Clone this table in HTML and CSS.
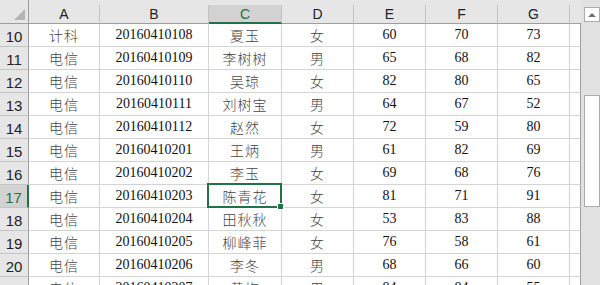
FILE: index.html
```html
<!DOCTYPE html>
<html>

<head>
    <link rel="stylesheet" href="styles.css">
    <title>成绩表</title>
</head>

<body>
    <div class="window">
        <div class="sheet">
            <!-- column headers -->
            <div class="corner">
                <svg width="11" height="11" viewBox="0 0 11 11"><polygon points="11,0 11,11 0,11" fill="#b4b4b4"/></svg>
            </div>
            <div class="colhead">A</div>
            <div class="colhead">B</div>
            <div class="colhead sel">C</div>
            <div class="colhead">D</div>
            <div class="colhead">E</div>
            <div class="colhead">F</div>
            <div class="colhead">G</div>
            <div class="colhead last"></div>

            <div class="rowhead">10</div>
            <div class="cell cn">计科</div><div class="cell num">20160410108</div><div class="cell cn">夏玉</div><div class="cell cn">女</div>
            <div class="cell num">60</div><div class="cell num">70</div><div class="cell num">73</div><div class="cell edge"></div>

            <div class="rowhead">11</div>
            <div class="cell cn">电信</div><div class="cell num">20160410109</div><div class="cell cn">李树树</div><div class="cell cn">男</div>
            <div class="cell num">65</div><div class="cell num">68</div><div class="cell num">82</div><div class="cell edge"></div>

            <div class="rowhead">12</div>
            <div class="cell cn">电信</div><div class="cell num">20160410110</div><div class="cell cn">吴琼</div><div class="cell cn">女</div>
            <div class="cell num">82</div><div class="cell num">80</div><div class="cell num">65</div><div class="cell edge"></div>

            <div class="rowhead">13</div>
            <div class="cell cn">电信</div><div class="cell num">20160410111</div><div class="cell cn">刘树宝</div><div class="cell cn">男</div>
            <div class="cell num">64</div><div class="cell num">67</div><div class="cell num">52</div><div class="cell edge"></div>

            <div class="rowhead">14</div>
            <div class="cell cn">电信</div><div class="cell num">20160410112</div><div class="cell cn">赵然</div><div class="cell cn">女</div>
            <div class="cell num">72</div><div class="cell num">59</div><div class="cell num">80</div><div class="cell edge"></div>

            <div class="rowhead">15</div>
            <div class="cell cn">电信</div><div class="cell num">20160410201</div><div class="cell cn">王炳</div><div class="cell cn">男</div>
            <div class="cell num">61</div><div class="cell num">82</div><div class="cell num">69</div><div class="cell edge"></div>

            <div class="rowhead">16</div>
            <div class="cell cn">电信</div><div class="cell num">20160410202</div><div class="cell cn">李玉</div><div class="cell cn">女</div>
            <div class="cell num">69</div><div class="cell num">68</div><div class="cell num">76</div><div class="cell edge"></div>

            <div class="rowhead sel">17</div>
            <div class="cell cn">电信</div><div class="cell num">20160410203</div><div class="cell cn active">陈青花</div><div class="cell cn">女</div>
            <div class="cell num">81</div><div class="cell num">71</div><div class="cell num">91</div><div class="cell edge"></div>

            <div class="rowhead">18</div>
            <div class="cell cn">电信</div><div class="cell num">20160410204</div><div class="cell cn">田秋秋</div><div class="cell cn">女</div>
            <div class="cell num">53</div><div class="cell num">83</div><div class="cell num">88</div><div class="cell edge"></div>

            <div class="rowhead">19</div>
            <div class="cell cn">电信</div><div class="cell num">20160410205</div><div class="cell cn">柳峰菲</div><div class="cell cn">女</div>
            <div class="cell num">76</div><div class="cell num">58</div><div class="cell num">61</div><div class="cell edge"></div>

            <div class="rowhead">20</div>
            <div class="cell cn">电信</div><div class="cell num">20160410206</div><div class="cell cn">李冬</div><div class="cell cn">男</div>
            <div class="cell num">68</div><div class="cell num">66</div><div class="cell num">60</div><div class="cell edge"></div>

            <div class="rowhead">21</div>
            <div class="cell cn">电信</div><div class="cell num">20160410207</div><div class="cell cn">黄梅</div><div class="cell cn">男</div>
            <div class="cell num">84</div><div class="cell num">84</div><div class="cell num">55</div><div class="cell edge"></div>
        </div>

        <div class="vscroll">
            <div class="arrow-up"></div>
            <div class="thumb"></div>
        </div>
    </div>
</body>

</html>
```

FILE: styles.css
```css
html,
body {
    margin: 0;
    height: 285px;
    overflow: hidden;
    background: #e6e6e6;
}

.window {
    display: flex;
}

.sheet {
    width: 581px;
    display: grid;
    grid-template-columns: 29px 71px 109px 73px 72px 72px 72px 72px 11px;
    grid-template-rows: 24px;
    grid-auto-rows: 23px;
    font-family: "Liberation Sans", sans-serif;
    font-size: 14px;
    color: #222;
}

.sheet div {
    box-sizing: border-box;
}

/* headers */
.corner {
    border-bottom: 1px solid #9e9e9e;
    border-right: 1px solid #9e9e9e;
    display: flex;
    align-items: flex-end;
    justify-content: flex-end;
    padding: 0 3px 3px 0;
}

.colhead {
    align-self: end;
    height: 19px;
    border-right: 1px solid #c4c4c4;
    border-bottom: 1px solid #9e9e9e;
    display: flex;
    justify-content: center;
    align-items: flex-end;
    line-height: 16px;
    padding-bottom: 1px;
}

.colhead.last {
    border-right: none;
}

.colhead.sel {
    background: #d2d2d2;
    border-bottom: 2px solid #217346;
    padding-bottom: 0;
    color: #217346;
}

.rowhead {
    border-right: 1px solid #9e9e9e;
    border-bottom: 1px solid #c4c4c4;
    display: flex;
    justify-content: center;
    align-items: flex-end;
    line-height: 16px;
    padding-bottom: 1px;
    font-size: 15px;
}

.rowhead.sel {
    background: #d2d2d2;
    border-right: 2px solid #217346;
    color: #217346;
}

/* cells */
.cell {
    background: #fff;
    border-right: 1px solid #d4d4d4;
    border-bottom: 1px solid #d4d4d4;
    display: flex;
    justify-content: center;
    align-items: center;
    white-space: nowrap;
}

.cell.edge {
    border-right: 1px solid #a0a0a0;
}

.num {
    font-family: "Liberation Serif", serif;
    color: #111;
}

.cn {
    font-family: "Noto Sans CJK SC", sans-serif;
    font-weight: 300;
    color: #444;
    letter-spacing: 1px;
}

.cell.active {
    position: relative;
}

.cell.active::after {
    content: "";
    position: absolute;
    left: -2px;
    top: -2px;
    right: -1px;
    bottom: -1px;
    border: 2px solid #217346;
}

.cell.active::before {
    content: "";
    position: absolute;
    right: -2px;
    bottom: -2px;
    width: 5px;
    height: 5px;
    background: #217346;
    box-shadow: 0 0 0 1px #fff;
    z-index: 1;
}

/* scrollbar */
.vscroll {
    width: 19px;
    height: 285px;
    background: #e2e2e2;
    display: flex;
    flex-direction: column;
    padding: 7px 0 0 3px;
    box-sizing: border-box;
}

.arrow-up {
    width: 16px;
    height: 15px;
    box-sizing: border-box;
    background: #fff;
    border: 1px solid #ababab;
    display: flex;
    align-items: center;
    justify-content: center;
}

.arrow-up::before {
    content: "";
    border-left: 4px solid transparent;
    border-right: 4px solid transparent;
    border-bottom: 4px solid #6f6f6f;
}

.thumb {
    margin-top: 73px;
    width: 16px;
    height: 112px;
    box-sizing: border-box;
    background: #fff;
    border: 1px solid #ababab;
}
```
